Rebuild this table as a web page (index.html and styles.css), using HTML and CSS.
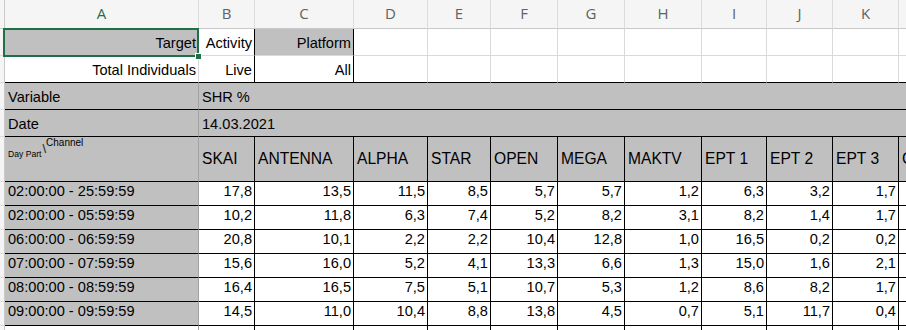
FILE: index.html
```html
<!DOCTYPE html>
<html>
<head>
<meta charset="utf-8">
<link rel="stylesheet" href="styles.css">
</head>
<body>
<div class="sheet">
  <!-- column headers -->
  <div class="ch corner"></div>
  <div class="ch sel">A</div>
  <div class="ch">B</div>
  <div class="ch">C</div>
  <div class="ch">D</div>
  <div class="ch">E</div>
  <div class="ch">F</div>
  <div class="ch">G</div>
  <div class="ch">H</div>
  <div class="ch">I</div>
  <div class="ch">J</div>
  <div class="ch">K</div>
  <div class="ch"></div>

  <!-- row 1 -->
  <div class="rh"></div>
  <div class="c fill r gl active">Target<span class="selbox"><span class="handle"></span></span></div>
  <div class="c r bk">Activity</div>
  <div class="c fill r bk">Platform</div>
  <div class="c"></div><div class="c"></div><div class="c"></div><div class="c"></div><div class="c"></div><div class="c"></div><div class="c"></div><div class="c"></div><div class="c"></div>

  <!-- row 2 -->
  <div class="rh"></div>
  <div class="c r bb">Total Individuals</div>
  <div class="c r bk bb">Live</div>
  <div class="c r bk bb">All</div>
  <div class="c bb"></div><div class="c bb"></div><div class="c bb"></div><div class="c bb"></div><div class="c bb"></div><div class="c bb"></div><div class="c bb"></div><div class="c bb"></div><div class="c bb"></div>

  <!-- row 3 -->
  <div class="rh"></div>
  <div class="c fill bb ga">Variable</div>
  <div class="c fill bb nr wide">SHR %</div>

  <!-- row 4 -->
  <div class="rh"></div>
  <div class="c fill bb ga">Date</div>
  <div class="c fill bb nr wide">14.03.2021</div>

  <!-- row 5 -->
  <div class="rh"></div>
  <div class="c fill bb ga dpcell"><span class="dp">Day Part</span><span class="bs">\</span><span class="chn">Channel</span></div>
  <div class="c fill bb bk hd">SKAI</div>
  <div class="c fill bb bk hd">ANTENNA</div>
  <div class="c fill bb bk hd">ALPHA</div>
  <div class="c fill bb bk hd">STAR</div>
  <div class="c fill bb bk hd">OPEN</div>
  <div class="c fill bb bk hd">MEGA</div>
  <div class="c fill bb bk hd">MAKTV</div>
  <div class="c fill bb bk hd">EPT 1</div>
  <div class="c fill bb bk hd">EPT 2</div>
  <div class="c fill bb bk hd">EPT 3</div>
  <div class="c fill bb nr hd">C</div>

  <!-- data rows -->
  <div class="rh"></div>
  <div class="c fill bb ga d">02:00:00 - 25:59:59</div>
  <div class="c r bk bb d">17,8</div><div class="c r bk bb d">13,5</div><div class="c r bk bb d">11,5</div><div class="c r bk bb d">8,5</div><div class="c r bk bb d">5,7</div><div class="c r bk bb d">5,7</div><div class="c r bk bb d">1,2</div><div class="c r bk bb d">6,3</div><div class="c r bk bb d">3,2</div><div class="c r bk bb d">1,7</div><div class="c bb nr"></div>

  <div class="rh"></div>
  <div class="c fill bb ga d">02:00:00 - 05:59:59</div>
  <div class="c r bk bb d">10,2</div><div class="c r bk bb d">11,8</div><div class="c r bk bb d">6,3</div><div class="c r bk bb d">7,4</div><div class="c r bk bb d">5,2</div><div class="c r bk bb d">8,2</div><div class="c r bk bb d">3,1</div><div class="c r bk bb d">8,2</div><div class="c r bk bb d">1,4</div><div class="c r bk bb d">1,7</div><div class="c bb nr"></div>

  <div class="rh"></div>
  <div class="c fill bb ga d">06:00:00 - 06:59:59</div>
  <div class="c r bk bb d">20,8</div><div class="c r bk bb d">10,1</div><div class="c r bk bb d">2,2</div><div class="c r bk bb d">2,2</div><div class="c r bk bb d">10,4</div><div class="c r bk bb d">12,8</div><div class="c r bk bb d">1,0</div><div class="c r bk bb d">16,5</div><div class="c r bk bb d">0,2</div><div class="c r bk bb d">0,2</div><div class="c bb nr"></div>

  <div class="rh"></div>
  <div class="c fill bb ga d">07:00:00 - 07:59:59</div>
  <div class="c r bk bb d">15,6</div><div class="c r bk bb d">16,0</div><div class="c r bk bb d">5,2</div><div class="c r bk bb d">4,1</div><div class="c r bk bb d">13,3</div><div class="c r bk bb d">6,6</div><div class="c r bk bb d">1,3</div><div class="c r bk bb d">15,0</div><div class="c r bk bb d">1,6</div><div class="c r bk bb d">2,1</div><div class="c bb nr"></div>

  <div class="rh"></div>
  <div class="c fill bb ga d">08:00:00 - 08:59:59</div>
  <div class="c r bk bb d">16,4</div><div class="c r bk bb d">16,5</div><div class="c r bk bb d">7,5</div><div class="c r bk bb d">5,1</div><div class="c r bk bb d">10,7</div><div class="c r bk bb d">5,3</div><div class="c r bk bb d">1,2</div><div class="c r bk bb d">8,6</div><div class="c r bk bb d">8,2</div><div class="c r bk bb d">1,7</div><div class="c bb nr"></div>

  <div class="rh"></div>
  <div class="c fill bb ga d">09:00:00 - 09:59:59</div>
  <div class="c r bk bb d">14,5</div><div class="c r bk bb d">11,0</div><div class="c r bk bb d">10,4</div><div class="c r bk bb d">8,8</div><div class="c r bk bb d">13,8</div><div class="c r bk bb d">4,5</div><div class="c r bk bb d">0,7</div><div class="c r bk bb d">5,1</div><div class="c r bk bb d">11,7</div><div class="c r bk bb d">0,4</div><div class="c bb nr"></div>

  <div class="rh"></div>
  <div class="c bb ga"></div>
  <div class="c r bk bb"></div><div class="c r bk bb"></div><div class="c r bk bb"></div><div class="c r bk bb"></div><div class="c r bk bb"></div><div class="c r bk bb"></div><div class="c r bk bb"></div><div class="c r bk bb"></div><div class="c r bk bb"></div><div class="c r bk bb"></div><div class="c bb nr"></div>
</div>
</body>
</html>
```
FILE: styles.css
```css
html, body {
  margin: 0;
  padding: 0;
  background: #ffffff;
  overflow: hidden;
}

.sheet {
  display: grid;
  grid-template-columns: 5px 194px 56px 99px 74px 63px 67px 67px 77px 65px 66px 66px 60px;
  grid-template-rows: 29px 27px 27px 27px 27px 45px repeat(7, 24px);
  width: 906px;
  height: 330px;
  overflow: hidden;
  font-family: "Liberation Sans", Arial, sans-serif;
  font-size: 14.6px;
  color: #000;
}

.ch {
  box-sizing: border-box;
  background: #f5f5f5;
  border-right: 1px solid #dcdcdc;
  border-bottom: 1px solid #c9c9c9;
  display: flex;
  align-items: center;
  justify-content: center;
  padding-bottom: 3px;
  font-family: "Open Sans", "Liberation Sans", sans-serif;
  font-size: 15px;
  color: #616161;
}

.ch.corner {
  border-right: 1px solid #c9c9c9;
}

.ch.sel {
  color: #1e7145;
}

.rh {
  box-sizing: border-box;
  background: #f5f5f5;
  border-right: 1px solid #c9c9c9;
  border-bottom: 1px solid #dcdcdc;
}

.c {
  box-sizing: border-box;
  border-right: 1px solid #d9d9d9;
  border-bottom: 1px solid #d9d9d9;
  display: flex;
  align-items: flex-end;
  padding: 0 2px 4px 3px;
  line-height: 16px;
  white-space: nowrap;
  overflow: visible;
  min-width: 0;
}

.c.d {
  padding-bottom: 6px;
}

.c.r {
  justify-content: flex-end;
  padding-right: 2px;
}

.fill {
  background: #c0c0c0;
}

.bk {
  border-right-color: #000;
}

.bb {
  border-bottom-color: #000;
}

.ga {
  border-right-color: #a3a3a3;
}

.nr {
  border-right-color: transparent;
}

.wide {
  grid-column: span 11;
}

.hd {
  align-items: center;
  font-size: 15.6px;
  padding-bottom: 1px;
  padding-top: 0;
}

.active {
  position: relative;
}

.selbox {
  position: absolute;
  top: -1px;
  left: -2px;
  right: -1px;
  bottom: -2px;
  border: 2px solid #1f7145;
  pointer-events: none;
}

.handle {
  position: absolute;
  right: -5px;
  bottom: -5px;
  width: 5px;
  height: 5px;
  background: #1f7145;
  border: 1px solid #ffffff;
}

.dpcell {
  align-items: flex-start;
  padding-top: 0;
  padding-bottom: 0;
  line-height: 1;
}

.dpcell .dp {
  font-size: 8.6px;
  margin-top: 13px;
}

.dpcell .bs {
  font-size: 13px;
  margin-top: 5px;
  margin-left: 1px;
  color: #222;
}

.dpcell .chn {
  font-size: 10px;
  margin-top: 1px;
}
```
